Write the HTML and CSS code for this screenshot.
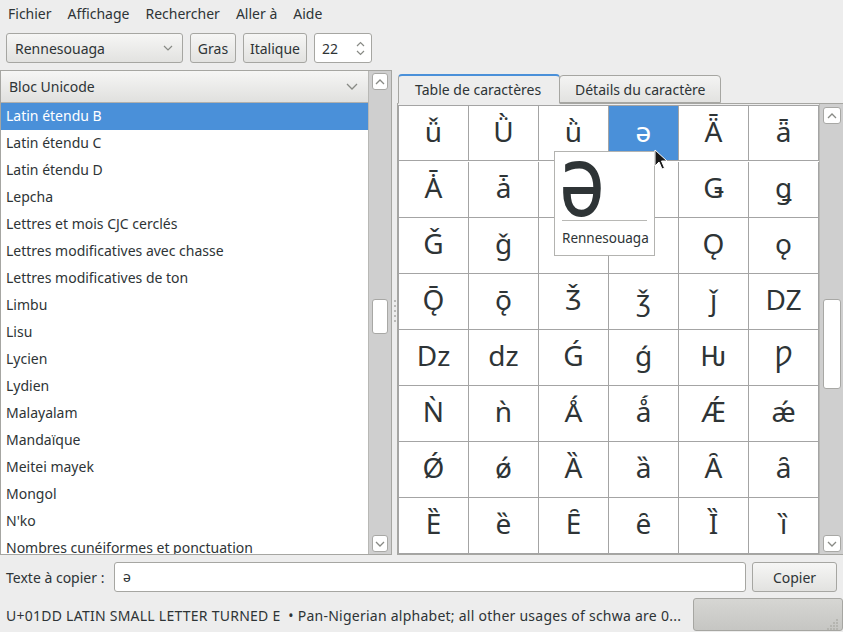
FILE: index.html
```html
<!DOCTYPE html>
<html lang="fr">
<head>
<meta charset="utf-8">
<title>Table de caractères</title>
<link rel="stylesheet" href="styles.css">
</head>
<body>
<div class="app">
  <nav class="menubar">
    <span class="menu-item">Fichier</span>
    <span class="menu-item">Affichage</span>
    <span class="menu-item">Rechercher</span>
    <span class="menu-item">Aller à</span>
    <span class="menu-item">Aide</span>
  </nav>

  <div class="toolbar">
    <div class="combo font-combo">
      <span>Rennesouaga</span>
      <svg class="chev" width="10" height="6" viewBox="0 0 10 6"><path d="M1 1 L5 5 L9 1" fill="none" stroke="#888a85" stroke-width="1.2"/></svg>
    </div>
    <button class="btn btn-gras">Gras</button>
    <button class="btn btn-italique">Italique</button>
    <div class="spin">
      <span>22</span>
      <div class="spin-arrows">
        <svg width="9" height="6" viewBox="0 0 9 6"><path d="M1 5 L4.5 1.5 L8 5" fill="none" stroke="#888a85" stroke-width="1.2"/></svg>
        <svg width="9" height="6" viewBox="0 0 9 6"><path d="M1 1 L4.5 4.5 L8 1" fill="none" stroke="#888a85" stroke-width="1.2"/></svg>
      </div>
    </div>
  </div>

  <div class="main">
    <section class="left-panel">
      <div class="list-col">
        <div class="list-header">
          <span>Bloc Unicode</span>
          <svg class="chev" width="12" height="7" viewBox="0 0 12 7"><path d="M1 1 L6 6 L11 1" fill="none" stroke="#888a85" stroke-width="1.3"/></svg>
        </div>
        <ul class="block-list">
          <li class="selected">Latin étendu B</li>
          <li>Latin étendu C</li>
          <li>Latin étendu D</li>
          <li>Lepcha</li>
          <li>Lettres et mois CJC cerclés</li>
          <li>Lettres modificatives avec chasse</li>
          <li>Lettres modificatives de ton</li>
          <li>Limbu</li>
          <li>Lisu</li>
          <li>Lycien</li>
          <li>Lydien</li>
          <li>Malayalam</li>
          <li>Mandaïque</li>
          <li>Meitei mayek</li>
          <li>Mongol</li>
          <li>N'ko</li>
          <li>Nombres cunéiformes et ponctuation</li>
        </ul>
      </div>
      <div class="scrollbar left-scroll">
        <div class="sb-btn"><svg width="10" height="6" viewBox="0 0 10 6"><path d="M1 5 L5 1 L9 5" fill="none" stroke="#888a85" stroke-width="1.3"/></svg></div>
        <div class="sb-track">
          <div class="sb-thumb left-thumb"></div>
        </div>
        <div class="sb-btn"><svg width="10" height="6" viewBox="0 0 10 6"><path d="M1 1 L5 5 L9 1" fill="none" stroke="#888a85" stroke-width="1.3"/></svg></div>
      </div>
    </section>

    <div class="pane-handle">
      <i></i><i></i><i></i><i></i><i></i>
    </div>

    <section class="notebook">
      <div class="tabs">
        <div class="tab active">Table de caractères</div>
        <div class="tab">Détails du caractère</div>
      </div>
      <div class="page">
        <div class="char-grid">
          <div class="cell">ǚ</div><div class="cell">Ǜ</div><div class="cell">ǜ</div><div class="cell sel">ǝ</div><div class="cell">Ǟ</div><div class="cell">ǟ</div>
          <div class="cell">Ǡ</div><div class="cell">ǡ</div><div class="cell">Ǣ</div><div class="cell">ǣ</div><div class="cell">Ǥ</div><div class="cell">ǥ</div>
          <div class="cell">Ǧ</div><div class="cell">ǧ</div><div class="cell">Ǩ</div><div class="cell">ǩ</div><div class="cell">Ǫ</div><div class="cell">ǫ</div>
          <div class="cell">Ǭ</div><div class="cell">ǭ</div><div class="cell">Ǯ</div><div class="cell">ǯ</div><div class="cell">ǰ</div><div class="cell">Ǳ</div>
          <div class="cell">ǲ</div><div class="cell">ǳ</div><div class="cell">Ǵ</div><div class="cell">ǵ</div><div class="cell">Ƕ</div><div class="cell">Ƿ</div>
          <div class="cell">Ǹ</div><div class="cell">ǹ</div><div class="cell">Ǻ</div><div class="cell">ǻ</div><div class="cell">Ǽ</div><div class="cell">ǽ</div>
          <div class="cell">Ǿ</div><div class="cell">ǿ</div><div class="cell">Ȁ</div><div class="cell">ȁ</div><div class="cell">Ȃ</div><div class="cell">ȃ</div>
          <div class="cell">Ȅ</div><div class="cell">ȅ</div><div class="cell">Ȇ</div><div class="cell">ȇ</div><div class="cell">Ȉ</div><div class="cell">ȉ</div>
        </div>
        <div class="scrollbar right-scroll">
          <div class="sb-btn"><svg width="10" height="6" viewBox="0 0 10 6"><path d="M1 5 L5 1 L9 5" fill="none" stroke="#888a85" stroke-width="1.3"/></svg></div>
          <div class="sb-track">
            <div class="sb-thumb right-thumb"></div>
          </div>
          <div class="sb-btn"><svg width="10" height="6" viewBox="0 0 10 6"><path d="M1 1 L5 5 L9 1" fill="none" stroke="#888a85" stroke-width="1.3"/></svg></div>
        </div>
      </div>
    </section>
  </div>

  <div class="copy-row">
    <label class="copy-label">Texte à copier :</label>
    <div class="entry">ə</div>
    <button class="btn btn-copier">Copier</button>
  </div>

  <div class="statusbar">
    <span class="status-text">U+01DD LATIN SMALL LETTER TURNED E &nbsp;• Pan-Nigerian alphabet; all other usages of schwa are 0...</span>
    <div class="status-box">
      <svg class="grip" width="14" height="14" viewBox="0 0 14 14">
        <g fill="#b5b5b0">
          <rect x="11" y="2" width="2" height="2"/>
          <rect x="8" y="5" width="2" height="2"/><rect x="11" y="5" width="2" height="2"/>
          <rect x="5" y="8" width="2" height="2"/><rect x="8" y="8" width="2" height="2"/><rect x="11" y="8" width="2" height="2"/>
          <rect x="2" y="11" width="2" height="2"/><rect x="5" y="11" width="2" height="2"/><rect x="8" y="11" width="2" height="2"/><rect x="11" y="11" width="2" height="2"/>
        </g>
      </svg>
    </div>
  </div>

  <div class="tooltip">
    <div class="tip-glyph">ə</div>
    <div class="tip-sep"></div>
    <div class="tip-name">Rennesouaga</div>
  </div>

  <svg class="cursor" width="14" height="22" viewBox="0 0 14 22">
    <path d="M1 1 L1 17 L5 13 L8 20 L10.5 19 L7.5 12 L13 12 Z" fill="#1a1a1a" stroke="#ffffff" stroke-width="1"/>
  </svg>
</div>
</body>
</html>
```

FILE: styles.css
```css
* { box-sizing: border-box; }

html, body {
  margin: 0;
  padding: 0;
}

body {
  width: 843px;
  height: 632px;
  overflow: hidden;
  background: #ededed;
  color: #2e3436;
  font-family: "Noto Sans", "DejaVu Sans", sans-serif;
  font-size: 14px;
}

.app {
  position: relative;
  width: 843px;
  height: 632px;
  display: flex;
  flex-direction: column;
}

/* Menu */
.menubar {
  height: 28px;
  display: flex;
  align-items: center;
  padding-bottom: 1px;
}
.menu-item {
  padding: 0 8px 0 8px;
}

/* Toolbar */
.toolbar {
  margin-top: 5px;
  height: 30px;
  padding: 0 6px;
  display: flex;
  gap: 7px;
}

.combo, .btn {
  border: 1px solid #a6a6a2;
  border-radius: 3px;
  background: linear-gradient(#f6f6f5, #e2e2e0);
  font: inherit;
  color: #2e3436;
  height: 30px;
}

.font-combo {
  width: 177px;
  display: flex;
  align-items: center;
  justify-content: space-between;
  padding: 0 9px 0 8px;
}

.btn {
  padding: 0;
  text-align: center;
}
.btn-gras { width: 46px; }
.btn-italique { width: 64px; }

.spin {
  width: 58px;
  height: 30px;
  background: #fff;
  border: 1px solid #a6a6a2;
  border-radius: 3px;
  display: flex;
  align-items: center;
  justify-content: space-between;
  padding: 0 6px 0 7px;
}
.spin-arrows {
  display: flex;
  flex-direction: column;
  gap: 3px;
}

/* Main area */
.main {
  margin-top: 7px;
  height: 485px;
  display: flex;
}

.left-panel {
  width: 392px;
  border: 1px solid #a6a6a2;
  display: flex;
  background: #fff;
}

.list-col {
  flex: 1;
  display: flex;
  flex-direction: column;
  overflow: hidden;
}

.list-header {
  height: 32px;
  flex: none;
  display: flex;
  align-items: center;
  justify-content: space-between;
  padding: 0 10px 0 8px;
  background: linear-gradient(#f6f6f5, #e0e0de);
  border-bottom: 1px solid #b0b0ad;
}

.block-list {
  list-style: none;
  margin: 0;
  padding: 0;
}
.block-list li {
  height: 27px;
  line-height: 26px;
  padding-left: 5px;
  white-space: nowrap;
}
.block-list li.selected {
  background: #4a90d9;
  color: #fff;
}

.scrollbar {
  width: 23px;
  background: #cfcfcf;
  display: flex;
  flex-direction: column;
  padding: 2px 3px 2px 3px;
  border-left: 1px solid #b8b8b5;
}
.sb-btn {
  height: 17px;
  flex: none;
  background: #fff;
  border: 1px solid #a8a8a5;
  border-radius: 3px;
  display: flex;
  align-items: center;
  justify-content: center;
}
.sb-track {
  flex: 1;
  position: relative;
}
.sb-thumb {
  position: absolute;
  left: 0;
  right: 0;
  background: #fff;
  border: 1px solid #a8a8a5;
  border-radius: 3px;
}
.left-thumb { top: 209px; height: 35px; }
.right-thumb { top: 175px; height: 90px; }

/* Pane handle */
.pane-handle {
  width: 5px;
  display: flex;
  flex-direction: column;
  justify-content: center;
  align-items: center;
  gap: 3px;
  padding-bottom: 4px;
}
.pane-handle i {
  width: 2px;
  height: 2px;
  background: #a9a9a6;
  border-radius: 1px;
}

/* Notebook */
.notebook {
  flex: 1;
  display: flex;
  flex-direction: column;
  margin-right: -2px;
}
.tabs {
  height: 33px;
  display: flex;
  align-items: flex-end;
  padding-left: 1px;
  position: relative;
  z-index: 1;
}
.tab {
  width: 162px;
  height: 28px;
  padding-left: 15px;
  line-height: 27px;
  border: 1px solid #a6a6a2;
  border-radius: 4px 4px 0 0;
  background: linear-gradient(#f4f4f3, #e2e2e0);
  white-space: nowrap;
}
.tab.active {
  height: 30px;
  line-height: 28px;
  padding-left: 16px;
  background: #ededed;
  border-top: 2px solid #4a90d9;
  border-bottom: 1px solid #ededed;
  margin-bottom: -1px;
}
.tab + .tab { margin-left: -1px; }

.page {
  flex: 1;
  border: 1px solid #a6a6a2;
  background: #ededed;
  display: flex;
  overflow: hidden;
}

.char-grid {
  width: 421px;
  display: grid;
  grid-template-columns: repeat(6, 70px);
  grid-auto-rows: 56px;
  align-content: start;
  background: #fff;
  border-left: 1px solid #a4a4a4;
  border-top: 1px solid #a4a4a4;
  margin-top: 1px;
  height: 450px;
}
.char-grid .cell {
  border-right: 1px solid #a4a4a4;
  border-bottom: 1px solid #a4a4a4;
  display: flex;
  align-items: center;
  justify-content: center;
  padding-bottom: 5px;
  font-family: "Noto Sans", "DejaVu Sans", sans-serif;
  font-size: 28px;
  color: #2e3436;
  line-height: 1;
}
.char-grid .cell:nth-child(-n+6) {
  height: 55px;
}
.char-grid .cell.sel {
  background: #4a90d9;
  color: #fff;
}

.right-scroll {
  flex: 1;
  background: #cfcfcf;
  border-left: 1px solid #b8b8b5;
  padding-top: 3px;
}

/* Copy row */
.copy-row {
  margin-top: 7px;
  height: 30px;
  display: flex;
  align-items: center;
  padding: 0 6px;
  gap: 6px;
}
.copy-label {
  width: 102px;
  white-space: nowrap;
}
.entry {
  width: 632px;
  height: 30px;
  background: #fff;
  border: 1px solid #a6a6a2;
  border-radius: 3px;
  padding-left: 8px;
  line-height: 28px;
}
.btn-copier { width: 85px; }

/* Status bar */
.statusbar {
  margin-top: 6px;
  flex: 1;
  display: flex;
  align-items: center;
  padding-left: 6px;
}
.status-text {
  flex: none;
  white-space: nowrap;
  width: 681px;
  overflow: hidden;
  letter-spacing: 0.25px;
}
.status-box {
  margin-left: 6px;
  width: 155px;
  height: 33px;
  align-self: flex-start;
  border: 1px solid #a6a6a2;
  border-radius: 3px;
  background: linear-gradient(#d6d6d3, #c6c6c3);
  position: relative;
}
.grip {
  position: absolute;
  right: 3px;
  bottom: -1px;
}

/* Tooltip */
.tooltip {
  position: absolute;
  left: 554px;
  top: 151px;
  width: 101px;
  height: 105px;
  background: #fff;
  border: 1px solid #b3b3b0;
  padding: 0 7px;
  display: flex;
  flex-direction: column;
}
.tip-glyph {
  font-family: "Noto Sans", sans-serif;
  font-size: 100px;
  line-height: 50px;
  height: 68px;
  margin-left: -3px;
  color: #2e3436;
  transform: scaleX(0.82);
  transform-origin: left center;
}
.tip-sep {
  height: 1px;
  background: #b8b8b5;
}
.tip-name {
  margin-top: 9px;
  line-height: 17px;
  font-size: 13.5px;
}

.cursor {
  position: absolute;
  left: 654px;
  top: 149px;
}
```
